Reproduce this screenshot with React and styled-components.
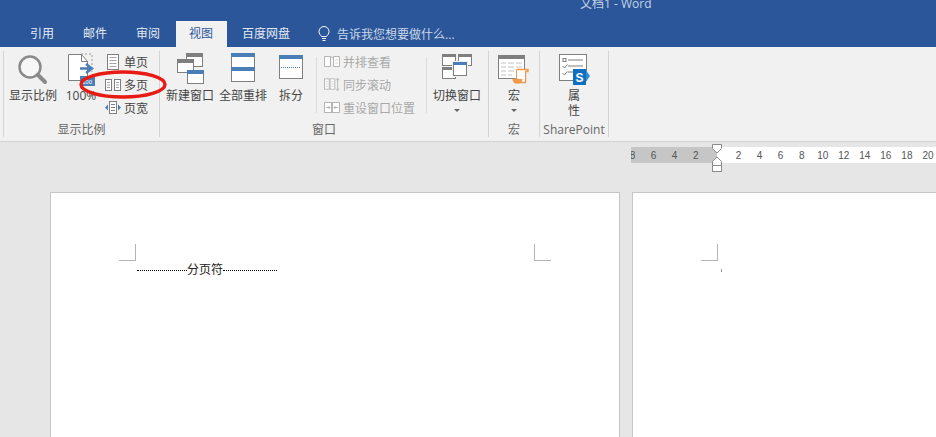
import React from 'react'
import styled, { createGlobalStyle } from 'styled-components'

const Global = createGlobalStyle`
  html, body { margin: 0; padding: 0; height: 100%; overflow: hidden; background: #e6e6e6; }
  body { font-family: "Open Sans", "Noto Sans CJK SC", sans-serif; font-size: 12px; color: #444; }
`

const BLUE = '#4a7eb7'
const GREY = '#7f7f7f'

const WinIcon = ({ x, y, w, h, head = GREY, band = 4 }) => (
  <g>
    <rect x={x + 0.5} y={y + 0.5} width={w - 1} height={h - 1} fill='#fff' stroke={GREY} />
    <rect x={x} y={y} width={w} height={band} fill={head} />
  </g>
)

const Zoom = () => (
  <svg width='32' height='32' viewBox='0 0 32 32'>
    <circle cx='13' cy='14' r='10.5' fill='#f7f7f7' stroke='#8a8a8a' strokeWidth='2.5' />
    <path d='M21 22l7 7' stroke='#8a8a8a' strokeWidth='4' strokeLinecap='round' />
  </svg>
)

const Hundred = () => (
  <svg width='30' height='34' viewBox='0 0 30 34'>
    <path d='M15 1h11v18' fill='none' stroke='#999' strokeDasharray='2 2' />
    <path d='M2.5 1.5h13l6 7v19h-19z' fill='#fff' stroke={GREY} />
    <path d='M15.5 1.5v7h6' fill='none' stroke={GREY} />
    <path d='M14 15.5h10M20 11l6 4.5-6 4.5' fill='none' stroke={BLUE} strokeWidth='2.4' />
    <rect x='14' y='23' width='15' height='10' fill={BLUE} />
    <text x='16' y='31' fontSize='6' fill='#fff' fontFamily='Liberation Sans'>100</text>
  </svg>
)

const NewWindow = () => (
  <svg width='28' height='32' viewBox='0 0 28 32'>
    <WinIcon x={10} y={0} w={17} h={14} />
    <WinIcon x={1} y={6} w={17} h={14} />
    <WinIcon x={11} y={17} w={17} h={14} head={BLUE} />
  </svg>
)

const Arrange = () => (
  <svg width='24' height='30' viewBox='0 0 24 30'>
    <rect x='0.5' y='0.5' width='23' height='28' fill='#fff' stroke={GREY} />
    <rect width='24' height='4' fill={BLUE} />
    <rect y='14' width='24' height='4' fill={BLUE} />
  </svg>
)

const Split = () => (
  <svg width='24' height='26' viewBox='0 0 24 26'>
    <rect x='0.5' y='2.5' width='23' height='23' fill='#fff' stroke={GREY} />
    <rect y='2' width='24' height='4' fill={BLUE} />
    <path d='M2 14.5h20' stroke={BLUE} strokeDasharray='1 1' />
  </svg>
)

const SwitchWin = () => (
  <svg width='30' height='27' viewBox='0 0 30 27'>
    <WinIcon x={0} y={1} w={14} h={12} band={3} />
    <WinIcon x={16} y={1} w={14} h={12} band={3} />
    <WinIcon x={0} y={14} w={14} h={12} band={3} />
    <rect x='10' y='8' width='16' height='16' fill='#f1f1f1' />
    <WinIcon x={11} y={9} w={14} h={14} head={BLUE} band={3} />
  </svg>
)

const Macro = () => (
  <svg width='32' height='32' viewBox='0 0 32 32'>
    <rect x='0.5' y='2.5' width='26' height='23' fill='#fff' stroke={GREY} />
    <rect y='2' width='27' height='4' fill={GREY} />
    <path d='M3 10h5M10 10h6M18 10h6M3 14h5M10 14h6M18 14h6M3 18h5M10 18h6M3 22h5M10 22h4' stroke='#c4c4c4' />
    <path d='M18.500 16.500H30v2h-2.500v11H17.500' fill='#fff' stroke='#ef9a4a' strokeWidth='1.400' />
    <path d='M18.500 16.500v9.500M15 26h9c0 2-1 4-3 4h-4c-1 0-2-2-2-4z' fill='#ef9a4a' stroke='#ef9a4a' />
    <path d='M20 18h7v8h-7z' fill='#fff' />
  </svg>
)

const Props = () => (
  <svg width='31' height='32' viewBox='0 0 31 32'>
    <rect x='0.5' y='1.5' width='27' height='26' fill='#fff' stroke={GREY} />
    <path d='M9 7h15M9 13h15M9 19h5' stroke={GREY} />
    <rect x='4' y='5.500' width='3' height='3' fill='none' stroke={GREY} />
    <path d='M3.500 13l2 2 3-3.500M3.500 20l2 2 3-3.500' fill='none' stroke={GREY} />
    <path d='M26 16l5 7-5 7z' fill='#2f8dd4' />
    <rect x='14' y='16' width='13' height='16' fill='#0f6fc0' />
    <text x='16.500' y='28.500' fontSize='12' fontWeight='700' fill='#fff' fontFamily='Liberation Sans'>S</text>
  </svg>
)

const OnePage = () => (
  <svg width='16' height='16' viewBox='0 0 16 16'>
    <rect x='2.500' y='0.500' width='11' height='15' fill='#fff' stroke={GREY} />
    <path d='M4.500 3.500h7M4.500 6.500h7M4.500 9.500h7M4.500 12.500h7' stroke={GREY} strokeOpacity='.7' />
  </svg>
)

const TwoPage = () => (
  <svg width='16' height='12' viewBox='0 0 16 12'>
    <rect x='0.500' y='0.500' width='6' height='11' fill='#fff' stroke={GREY} />
    <rect x='9.500' y='0.500' width='6' height='11' fill='#fff' stroke={GREY} />
    <path d='M2 3.500h3M2 6h3M2 8.500h3M11 3.500h3M11 6h3M11 8.500h3' stroke={GREY} strokeOpacity='.7' />
  </svg>
)

const PageWide = () => (
  <svg width='16' height='13' viewBox='0 0 16 13'>
    <rect x='4.500' y='0.500' width='7' height='12' fill='#fff' stroke={GREY} />
    <path d='M6 3.500h4M6 6.500h4M6 9.500h4' stroke={GREY} />
    <path d='M0 6.500l3-3v6zM16 6.500l-3-3v6z' fill={BLUE} />
  </svg>
)

const SideBySide = () => (
  <svg width='16' height='13' viewBox='0 0 16 13'>
    <path d='M.5 1.500h6v10h-6zM9.500 1.500h6v10h-6zM6.500 1.500l3 2v8' fill='#fff' stroke='#b5b5b5' />
    <path d='M11 5h3M11 8h3' stroke='#d4d4d4' />
  </svg>
)

const SyncScroll = () => (
  <svg width='17' height='15' viewBox='0 0 17 15'>
    <rect x='0.500' y='1.500' width='5' height='11' fill='#fff' stroke='#b5b5b5' />
    <rect x='6.500' y='1.500' width='5' height='11' fill='#fff' stroke='#b5b5b5' />
    <path d='M2 4.500h2M2 7h2M2 9.500h2M8 4.500h2M8 7h2M8 9.500h2' stroke='#c8c8c8' />
    <path d='M14.500 1v13M13 3l1.500-2 1.500 2M13 12l1.500 2 1.500-2' fill='none' stroke='#b5b5b5' />
  </svg>
)

const ResetWin = () => (
  <svg width='16' height='13' viewBox='0 0 16 13'>
    <rect x='0.500' y='1.500' width='7' height='10' fill='#fff' stroke='#b5b5b5' />
    <rect x='8.500' y='1.500' width='7' height='10' fill='#fff' stroke='#b5b5b5' />
    <path d='M2 6.500h4M4.500 5L6 6.500 4.500 8M14 6.500h-4M11.500 5L10 6.500 11.500 8' fill='none' stroke='#b5b5b5' />
  </svg>
)

const Bulb = () => (
  <svg width='12' height='16' viewBox='0 0 12 16'>
    <path d='M3.500 10.500C2.500 9 1 8 1 5.500a5 5 0 0 1 10 0c0 2.500-1.500 3.500-2.500 5zM4 12.500h4M4.500 14.500h3' fill='none' stroke='#fff' />
  </svg>
)

const Frame = styled.div`
  position: relative;
  width: 936px;
  height: 437px;
  overflow: hidden;
`

const Header = styled.header`
  background: #2b579a;
  height: 47px;
`

const TitleBar = styled.div`
  height: 21px;
  padding-left: 580px;
  font-size: 12px;
  line-height: 8px;
  color: #c4d2e6;
`

const Tabs = styled.nav`
  display: flex;
  align-items: stretch;
  height: 26px;
  padding-left: 17px;
  gap: 2px;
`

const Tab = styled.div`
  padding: 0 14px 0 13px;
  line-height: 25px;
  white-space: nowrap;
  color: ${p => (p.$active ? '#2b579a' : '#e4eaf3')};
  background: ${p => (p.$active ? '#f1f1f1' : 'transparent')};
`

const Tell = styled.div`
  display: flex;
  align-items: center;
  gap: 7px;
  margin-left: 12px;
  color: #c9d6e8;
  line-height: 25px;
`

const Ribbon = styled.section`
  display: flex;
  height: 94px;
  padding-left: 3px;
  background: #f1f1f1;
  border-bottom: 1px solid #d2d2d2;
`

const Group = styled.div`
  display: flex;
  flex-direction: column;
  box-sizing: border-box;
  width: ${p => p.$w}px;
  height: 86px;
  margin-top: 4px;
  border-right: 1px solid #d4d4d4;
  border-left: ${p => (p.$first ? '1px solid #d4d4d4' : '0')};
`

const GroupBody = styled.div`
  display: flex;
  flex: 1;
  min-height: 0;
`

const GroupLabel = styled.div`
  height: 14px;
  line-height: 14px;
  text-align: center;
  color: #666;
  white-space: nowrap;
`

const BigButton = styled.div`
  display: flex;
  flex-direction: column;
  align-items: center;
  flex: none;
  width: ${p => p.$w}px;
  margin-left: ${p => p.$ml || 0}px;
  padding-top: 2px;
  line-height: 15px;
  color: #444;
  white-space: nowrap;
`

const IconSlot = styled.div`
  display: flex;
  align-items: flex-start;
  justify-content: center;
  height: 34px;
  margin-bottom: 1px;
`

const Caret = styled.div`
  width: 0;
  height: 0;
  margin-top: 6px;
  border: 3px solid transparent;
  border-top: 3px solid #666;
  border-bottom: 0;
`

const SmallColumn = styled.div`
  display: flex;
  flex-direction: column;
  flex: none;
  width: ${p => p.$w}px;
  margin-left: ${p => p.$ml || 0}px;
  margin-top: -1px;
`

const SmallRow = styled.div`
  display: flex;
  align-items: center;
  gap: 3px;
  height: 23px;
  white-space: nowrap;
  color: ${p => (p.$off ? '#a8a8a8' : '#444')};
  svg { flex: none; width: 16px; }
`

const VRule = styled.div`
  flex: none;
  width: 1px;
  height: 56px;
  margin: 6px 0 0 ${p => p.$ml}px;
  background: #dcdcdc;
`

const RulerBar = styled.div`
  display: flex;
  height: 16px;
  margin: 5px 0 0 631px;
  background: #fff;
  font-family: "Liberation Sans", sans-serif;
  font-size: 10px;
  line-height: 17px;
  color: #555;
`

const RulerPart = styled.div`
  display: flex;
  flex: none;
  overflow: hidden;
  box-sizing: border-box;
  width: ${p => p.$w}px;
  padding-left: ${p => p.$lead || 0}px;
  background: ${p => (p.$dark ? '#c6c6c6' : 'transparent')};
`

const Tick = styled.span`
  flex: none;
  width: 21.050px;
  text-align: center;
  margin-left: ${p => p.$shift || 0}px;
`

const Marker = styled.svg`
  position: absolute;
  left: 711px;
  top: 143px;
`

const Ellipse = styled.svg`
  position: absolute;
  left: 78px;
  top: 68px;
`

const Pages = styled.main`
  display: flex;
  gap: 12px;
  margin-top: 29px;
  padding-left: 50px;
`

const Page = styled.article`
  flex: none;
  box-sizing: border-box;
  width: 570px;
  height: 300px;
  padding: 51px 68px 0;
  background: #fff;
  border: 1px solid #c6c6c6;
`

const CropRow = styled.div`
  display: flex;
  justify-content: space-between;
`

const Crop = styled.div`
  box-sizing: border-box;
  width: 17px;
  height: 17px;
  border-bottom: 1px solid #b4b4b4;
  ${p => (p.$right ? 'border-left: 1px solid #b4b4b4;' : 'border-right: 1px solid #b4b4b4;')}
`

const BreakLine = styled.div`
  display: flex;
  align-items: center;
  width: 140px;
  margin: 1px 0 0 18px;
  color: #222;
  line-height: 16px;
  &::before, &::after {
    content: '';
    border-top: 1px dotted #000;
  }
  &::before { flex: 50; }
  &::after { flex: 54; }
`

const Cursor = styled.div`
  width: 2px;
  height: 3px;
  margin: 8px 0 0 18px;
  border-right: 1px solid #999;
`

const left = [8, 6, 4, 2]
const right = [2, 4, 6, 8, 10, 12, 14, 16, 18, 20]

export default function App () {
  return (
    <Frame>
      <Global />
      <Header>
        <TitleBar>文档1 - Word</TitleBar>
        <Tabs>
          <Tab>引用</Tab>
          <Tab>邮件</Tab>
          <Tab>审阅</Tab>
          <Tab $active>视图</Tab>
          <Tab>百度网盘</Tab>
          <Tell><Bulb />告诉我您想要做什么...</Tell>
        </Tabs>
      </Header>
      <Ribbon>
        <Group $w={157} $first>
          <GroupBody>
            <BigButton $w={48} $ml={5}><IconSlot><Zoom /></IconSlot>显示比例</BigButton>
            <BigButton $w={30} $ml={9}><IconSlot><Hundred /></IconSlot>100%</BigButton>
            <SmallColumn $w={50} $ml={9}>
              <SmallRow><OnePage />单页</SmallRow>
              <SmallRow><TwoPage />多页</SmallRow>
              <SmallRow><PageWide />页宽</SmallRow>
            </SmallColumn>
          </GroupBody>
          <GroupLabel>显示比例</GroupLabel>
        </Group>
        <Group $w={329}>
          <GroupBody>
            <BigButton $w={48} $ml={6}><IconSlot><NewWindow /></IconSlot>新建窗口</BigButton>
            <BigButton $w={48} $ml={5}><IconSlot><Arrange /></IconSlot>全部重排</BigButton>
            <BigButton $w={24} $ml={12}><IconSlot><Split /></IconSlot>拆分</BigButton>
            <VRule $ml={13} />
            <SmallColumn $w={101} $ml={7}>
              <SmallRow $off><SideBySide />并排查看</SmallRow>
              <SmallRow $off><SyncScroll />同步滚动</SmallRow>
              <SmallRow $off><ResetWin />重设窗口位置</SmallRow>
            </SmallColumn>
            <VRule $ml={1} />
            <BigButton $w={48} $ml={6}>
              <IconSlot><SwitchWin /></IconSlot>切换窗口<Caret />
            </BigButton>
          </GroupBody>
          <GroupLabel>窗口</GroupLabel>
        </Group>
        <Group $w={51}>
          <GroupBody>
            <BigButton $w={50}><IconSlot><Macro /></IconSlot>宏<Caret /></BigButton>
          </GroupBody>
          <GroupLabel>宏</GroupLabel>
        </Group>
        <Group $w={69}>
          <GroupBody>
            <BigButton $w={68}><IconSlot><Props /></IconSlot>属<br />性</BigButton>
          </GroupBody>
          <GroupLabel>SharePoint</GroupLabel>
        </Group>
      </Ribbon>
      <RulerBar>
        <RulerPart $dark $w={86}>
          {left.map((n, i) => <Tick key={n} $shift={i === 0 ? -9 : 0}>{n}</Tick>)}
        </RulerPart>
        <RulerPart $w={219} $lead={11}>
          {right.map(n => <Tick key={n}>{n}</Tick>)}
        </RulerPart>
      </RulerBar>
      <Marker width='12' height='30' viewBox='0 0 12 30'>
        <path d='M1.500 1.500h9v4L6 10 1.500 5.500zM6 14l4.500 4.500v4h-9v-4z' fill='#fff' stroke='#8a8a8a' />
        <rect x='1.500' y='22.500' width='9' height='6' fill='#fff' stroke='#8a8a8a' />
      </Marker>
      <Pages>
        <Page>
          <CropRow><Crop /><Crop $right /></CropRow>
          <BreakLine>分页符</BreakLine>
        </Page>
        <Page>
          <CropRow><Crop /><Crop $right /></CropRow>
          <Cursor />
        </Page>
      </Pages>
      <Ellipse width='92' height='34' viewBox='0 0 92 34'>
        <ellipse cx='45' cy='16.500' rx='42' ry='12.500' fill='none' stroke='#e81a14' strokeWidth='3.400' />
      </Ellipse>
    </Frame>
  )
}
